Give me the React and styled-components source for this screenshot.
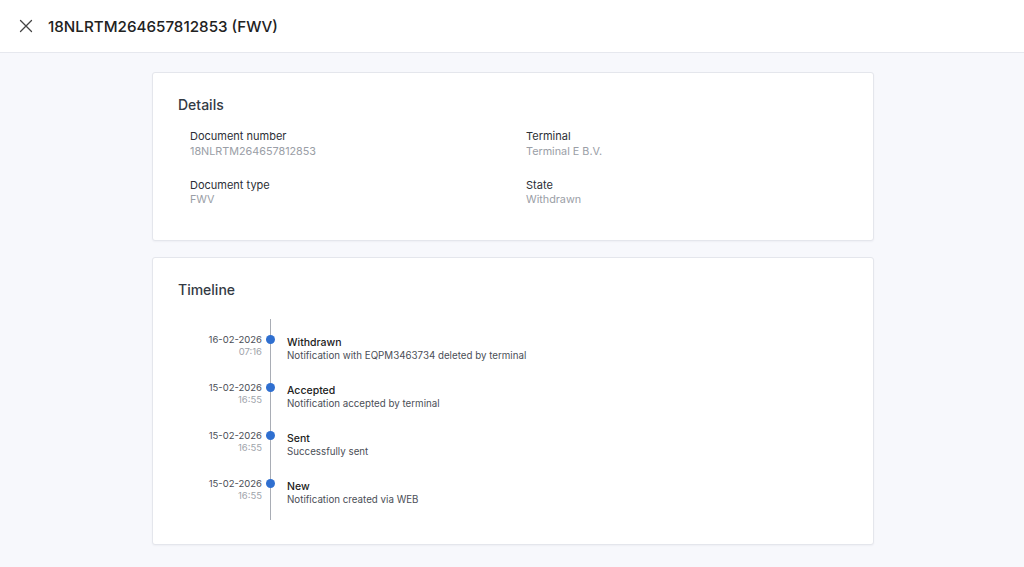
import React from 'react';
import styled, { createGlobalStyle } from 'styled-components';

const GlobalStyle = createGlobalStyle`
    html, body {
        margin: 0;
        padding: 0;
        background: #f7f8fc;
        font-family: Inter, "Noto Sans", sans-serif;
        color: #222;
    }
`;

const Header = styled.header`
    height: 53px;
    background: #fff;
    border-bottom: 1px solid #e6e8ee;
    display: flex;
    align-items: center;
    padding: 0 0 0 19px;
    gap: 15px;
    box-sizing: border-box;
`;

const CloseButton = styled.button`
    border: none;
    background: none;
    padding: 0;
    width: 14px;
    height: 14px;
    display: flex;
    align-items: center;
    justify-content: center;
    color: #444;
    cursor: pointer;
`;

const Title = styled.h1`
    margin: 0;
    font-size: 15.2px;
    font-weight: 500;
    color: #222;
`;

const Main = styled.main`
    width: 722px;
    margin: 0 auto;
    padding: 19px 0 24px 2px;
    display: flex;
    flex-direction: column;
    gap: 16px;
`;

const Card = styled.section`
    background: #fff;
    border: 1px solid #e4e6ec;
    border-radius: 3px;
    box-shadow: 0 1px 2px rgba(20, 30, 60, 0.04);
    padding: 23px 25px ${p => p.bottom}px;
`;

const CardTitle = styled.h2`
    margin: 0 0 ${p => p.gap}px;
    font-size: 14px;
    font-weight: 500;
    color: #333a44;
`;

const Fields = styled.div`
    display: grid;
    grid-template-columns: 336px 1fr;
    row-gap: 19px;
    padding-left: 12px;
`;

const Field = styled.div`
    display: flex;
    flex-direction: column;
    gap: 1.5px;
`;

const Label = styled.span`
    font-size: 11px;
    line-height: 14px;
    color: #2c2f36;
`;

const Value = styled.span`
    font-size: 10.8px;
    line-height: 14px;
    color: #9a9ea6;
`;

const Timeline = styled.div`
    position: relative;
    padding-top: 15px;
`;

const Line = styled.div`
    position: absolute;
    left: 92px;
    top: 0;
    bottom: 6px;
    width: 1px;
    background: #a9adb5;
`;

const Item = styled.div`
    display: grid;
    grid-template-columns: 84px 17px 1fr;
    height: 48px;
`;

const When = styled.div`
    display: flex;
    flex-direction: column;
    align-items: flex-end;
    font-size: 9.5px;
    line-height: 12px;
    color: #4a4e56;
`;

const Time = styled.span`
    color: #a0a4ab;
`;

const Dot = styled.div`
    width: 9px;
    height: 9px;
    border-radius: 50%;
    background: #2f6fd0;
    margin: 1px 0 0 4px;
    position: relative;
`;

const What = styled.div`
    display: flex;
    flex-direction: column;
    padding-left: 8px;
    margin-top: 2px;
`;

const EventTitle = styled.span`
    font-size: 10.5px;
    font-weight: 500;
    line-height: 13px;
    color: #222;
`;

const EventText = styled.span`
    font-size: 9.75px;
    line-height: 13px;
    color: #4a4e56;
`;

const details = [
    ['Document number', '18NLRTM264657812853'],
    ['Terminal', 'Terminal E B.V.'],
    ['Document type', 'FWV'],
    ['State', 'Withdrawn'],
];

const events = [
    { date: '16-02-2026', time: '07:16', title: 'Withdrawn', text: 'Notification with EQPM3463734 deleted by terminal' },
    { date: '15-02-2026', time: '16:55', title: 'Accepted', text: 'Notification accepted by terminal' },
    { date: '15-02-2026', time: '16:55', title: 'Sent', text: 'Successfully sent' },
    { date: '15-02-2026', time: '16:55', title: 'New', text: 'Notification created via WEB' },
];

export default function App() {
    return (
        <>
            <GlobalStyle />
            <Header>
                <CloseButton aria-label="Close">
                    <svg width="14" height="14" viewBox="0 0 14 14" fill="none" stroke="currentColor" strokeWidth="1.3" strokeLinecap="round">
                        <path d="M1.5 1.5 L12.5 12.5 M12.5 1.5 L1.5 12.5" />
                    </svg>
                </CloseButton>
                <Title>18NLRTM264657812853 (FWV)</Title>
            </Header>
            <Main>
                <Card bottom={33}>
                    <CardTitle gap={16}>Details</CardTitle>
                    <Fields>
                        {details.map(([label, value]) => (
                            <Field key={label}>
                                <Label>{label}</Label>
                                <Value>{value}</Value>
                            </Field>
                        ))}
                    </Fields>
                </Card>
                <Card bottom={18}>
                    <CardTitle gap={21}>Timeline</CardTitle>
                    <Timeline>
                        <Line />
                        {events.map((e, i) => (
                            <Item key={i}>
                                <When>
                                    <span>{e.date}</span>
                                    <Time>{e.time}</Time>
                                </When>
                                <Dot />
                                <What>
                                    <EventTitle>{e.title}</EventTitle>
                                    <EventText>{e.text}</EventText>
                                </What>
                            </Item>
                        ))}
                    </Timeline>
                </Card>
            </Main>
        </>
    );
}
